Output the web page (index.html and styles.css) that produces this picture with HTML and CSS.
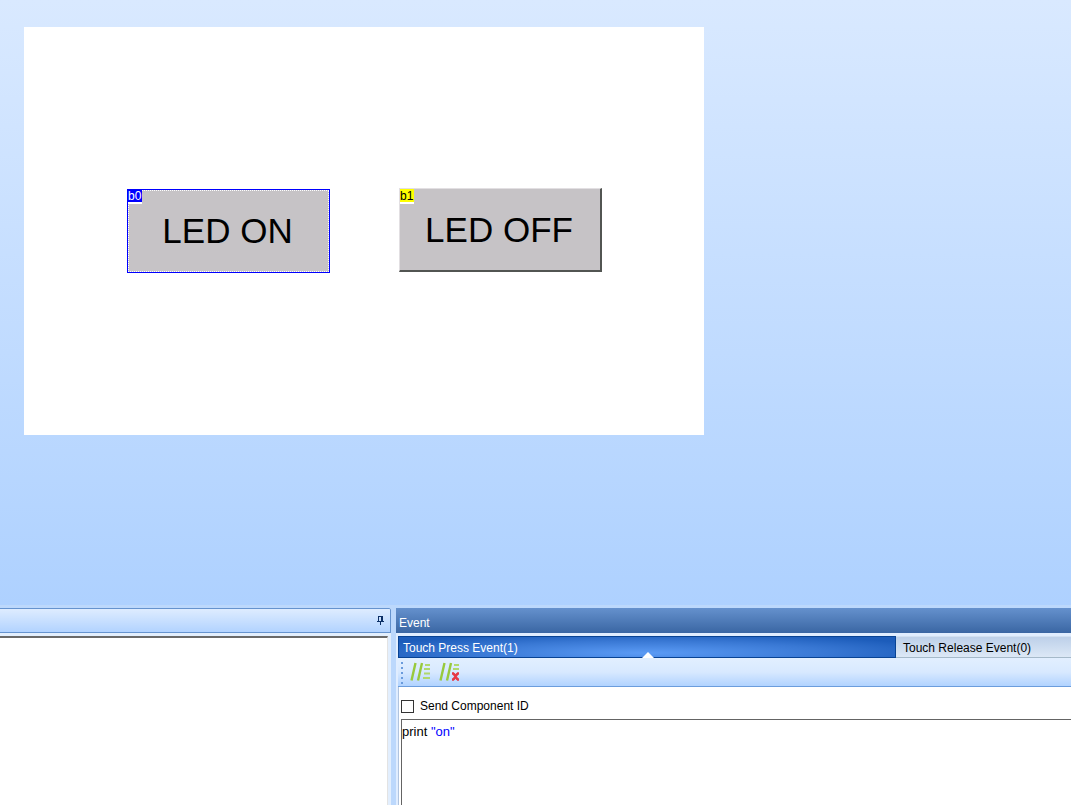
FILE: index.html
```html
<!DOCTYPE html>
<html lang="en">
<head>
<meta charset="utf-8">
<title>Event editor</title>
<link rel="stylesheet" href="styles.css">
</head>
<body>
<main class="workspace">
  <div class="canvas">
    <button class="component component-on" type="button"><span class="tag">b0</span>LED ON</button>
    <button class="component component-off" type="button"><span class="tag">b1</span>LED OFF</button>
  </div>
</main>
<div class="docks">
  <section class="output">
    <header class="output-head">
      <button class="pin" type="button" aria-label="Pin panel">
        <svg width="7" height="9" viewBox="0 0 7 9" shape-rendering="crispEdges" fill="#0b2f66"><path d="M1 0h5v5H4V1H2v4H1zM0 5h7v1H0zM3 6h1v3H3z"/></svg>
      </button>
    </header>
    <div class="output-body"></div>
  </section>
  <section class="event">
    <header class="event-head">Event</header>
    <div class="event-main">
      <nav class="tabs">
        <button class="tab tab-active" type="button">Touch Press Event(1)</button>
        <button class="tab tab-idle" type="button">Touch Release Event(0)</button>
      </nav>
      <div class="toolbar">
        <svg class="grip" width="2" height="22" viewBox="0 0 2 22" fill="#6a9bdc"><path d="M0 0h2v2H0zM0 5h2v2H0zM0 10h2v2H0zM0 15h2v2H0zM0 20h2v2H0z"/></svg>
        <button class="tool" type="button" aria-label="Comment lines">
          <svg width="21" height="20" viewBox="0 0 21 20" fill="none" stroke="#98c93c" stroke-width="2.4"><path d="M1.5 18.5 5.500 1M8 18.500 12 1"/><path stroke="#b0d86c" stroke-width="2" d="M15 3h5M14 7h6M14 11.500h6M13 16h7"/></svg>
        </button>
        <button class="tool" type="button" aria-label="Uncomment lines">
          <svg width="21" height="20" viewBox="0 0 21 20" fill="none" stroke="#98c93c" stroke-width="2.4"><path d="M1.5 18.5 5.500 1M8 18.500 12 1"/><path stroke="#b0d86c" stroke-width="2" d="M15 3h5M14 7h6"/><path stroke="#e63845" stroke-width="2.4" d="m14.500 11.500 4 6m0-6-4 6M13 11.500h2m3 0h2M13 17.500h2m3 0h2"/></svg>
        </button>
      </div>
      <div class="editor">
        <label class="option"><input class="check" type="checkbox">Send Component ID</label>
        <div class="code" role="textbox" aria-label="Event code" aria-multiline="true" contenteditable="true" spellcheck="false">print <span class="string">"on"</span></div>
      </div>
    </div>
  </section>
</div>
</body>
</html>
```
FILE: styles.css
```css
* { box-sizing: border-box; }
body {
  margin: 0;
  min-height: 100vh;
  display: flex;
  flex-direction: column;
  background: #bcd8fc;
  color: #000;
  font: 12px/16px "Liberation Sans", Arial, sans-serif;
}
button { margin: 0; padding: 0; border: 0; background: none; color: inherit; font: inherit; }
svg { display: block; }

.workspace {
  flex: 1;
  padding: 27px 24px;
  background: linear-gradient(#d9e9ff, #aed1ff);
}
.canvas { position: relative; width: 680px; height: 408px; background: #fff; }
.component {
  position: absolute;
  width: 203px;
  height: 84px;
  padding-right: 2px;
  background: #c6c3c6;
  font-size: 35px;
  line-height: 80px;
}
.component-on {
  left: 103px;
  top: 162px;
  border: 1px solid #00f;
  outline: 1px dotted #fff;
  outline-offset: -2px;
}
.component-off {
  left: 375px;
  top: 161px;
  border: 2px solid;
  border-width: 1px 2px 2px 1px;
  border-color: #e2dfe2 #525552 #525552 #e2dfe2;
}
.tag {
  position: absolute;
  left: 0;
  top: 0;
  padding-right: 1px;
  height: 15px;
  border-bottom: 2px solid #fff;
  font-size: 12px;
  line-height: 15px;
}
.component-on .tag { height: 14px; line-height: 13px; background: #00f; color: #fff; }
.component-off .tag { background: #ff0; }

.docks { display: flex; gap: 5px; height: 200px; padding-top: 3px; }
.output { width: 391px; display: flex; flex-direction: column; background: #e2eefd; }
.output-head {
  height: 25px;
  padding: 7px 6px;
  display: flex;
  justify-content: flex-end;
  border: 1px solid #6593cf;
  border-left: 0;
  border-radius: 0 2px 0 0;
  background: linear-gradient(#deecff, #b2d3ff);
}
.pin { width: 7px; height: 9px; }
.output-body {
  flex: 1;
  margin: 3px 3px 0 0;
  border-top: 2px solid #696969;
  border-right: 1px solid #e3e3e3;
  background: #fff;
}

.event { flex: 1; min-width: 0; display: flex; flex-direction: column; background: #e0edff; }
.event-head {
  height: 25px;
  padding: 7px 3px 0;
  background: linear-gradient(#6591cd, #3a66a3);
  color: #fff;
}
.event-main { flex: 1; margin: 3px 0 0 2px; display: flex; flex-direction: column; }
.tabs { display: flex; }
.tab { height: 22px; padding: 0 5px; text-align: left; line-height: 22px; }
.tab-active {
  position: relative;
  width: 74%;
  border: 1px solid #084394;
  padding: 0 4px;
  background: radial-gradient(ellipse 60% 100% at 50% 80%, #5b9bf5, #3978d4 60%, #1c5cba);
  color: #fff;
}
.tab-active::after {
  content: "";
  position: absolute;
  left: 50%;
  bottom: -1px;
  margin-left: -5px;
  border: 6px solid transparent;
  border-top: 0;
  border-bottom-color: #fff;
}
.tab-idle {
  flex: 1;
  padding-left: 7px;
  border-top: 1px solid #d2e0f1;
  border-bottom: 1px solid #a5b9c9;
  background: linear-gradient(#bdd0e9, #dce8f6);
}
.toolbar {
  height: 29px;
  padding: 4px 3px 0;
  display: flex;
  border-bottom: 1px solid #6b9ddd;
  background: linear-gradient(#e2efff, #d8e9ff 50%, #b1d3ff);
}
.grip { margin-right: 7px; }
.tool { width: 21px; height: 20px; margin-right: 8px; }
.editor {
  flex: 1;
  padding: 10px 0 0 2px;
  display: flex;
  flex-direction: column;
  border-left: 1px solid #b0c4e0;
  background: #fff;
}
.option { display: flex; align-items: center; gap: 6px; height: 18px; }
.check {
  appearance: none;
  width: 13px;
  height: 13px;
  margin: 0;
  border: 1px solid #333;
  background: #fff;
}
.check:checked { background: #2861b8; }
.code {
  flex: 1;
  margin: 4px 0 0;
  padding: 4px 0;
  border: 1px solid #646464;
  border-width: 1px 0 0 1px;
  font-size: 13px;
}
.string { color: #00f; }
```
